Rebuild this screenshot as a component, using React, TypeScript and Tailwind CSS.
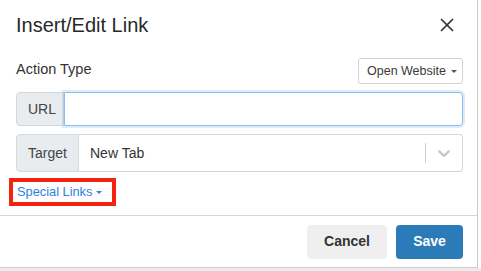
import { X } from "lucide-react";

function Caret({ className }: { className?: string }) {
  return (
    <span
      className={`inline-block w-0 h-0 border-x-[3px] border-t-[3px] border-x-transparent border-t-current ${className ?? ""}`}
    />
  );
}

export default function App() {
  return (
    <div className="w-[481px] h-[271px] bg-white overflow-hidden flex flex-col font-['Liberation_Sans',Arial,sans-serif] text-[#2b2b2b]">
      <div className="w-[478px] h-[268px] shrink-0 bg-white border-r border-b border-[#cbcbcb] flex flex-col">
        {/* Header */}
        <div className="h-[48px] shrink-0 flex items-start justify-between pl-4 pr-[19px]">
          <h2 className="pt-[13px] text-[20px] leading-[24px] text-[#282828]">Insert/Edit Link</h2>
          <button className="mt-[14px] text-[#333]">
            <X className="w-[22px] h-[22px]" strokeWidth={1.9} />
          </button>
        </div>

        {/* Body */}
        <div className="flex-1 pl-4 pr-[14px]">
          <div className="mt-[10px] h-[26px] flex items-start justify-between">
            <span className="pt-[2px] text-[14.5px] leading-[18px] text-[#333]">Action Type</span>
            <button className="h-[26px] w-[105px] border border-[#d2d2d2] rounded-[3px] flex items-center gap-[5px] pl-[8px] text-[12.5px] text-[#3a3a3a]">
              Open Website
              <Caret className="text-[#555]" />
            </button>
          </div>

          <div className="mt-[8px] h-[34px] flex">
            <div className="w-[48px] shrink-0 bg-[#e9ecef] border border-[#d3d7db] rounded-l-[4px] flex items-center pl-[11px] text-[14px] text-[#444]">
              URL
            </div>
            <div className="flex-1 bg-white border border-[#8cbcf0] rounded-r-[4px] shadow-[0_0_0_2px_rgba(120,170,235,0.25)]" />
          </div>

          <div className="mt-[8px] h-[38px] flex">
            <div className="w-[63px] shrink-0 bg-[#e9ecef] border border-[#d6d9dc] rounded-l-[4px] flex items-center pl-[11px] text-[14px] text-[#444]">
              Target
            </div>
            <div className="flex-1 border border-l-0 border-[#d6d6d6] rounded-r-[4px] flex items-center">
              <span className="flex-1 pl-[11px] text-[14px] text-[#333]">New Tab</span>
              <span className="w-px h-[20px] bg-[#cfcfcf]" />
              <span className="w-[36px] flex items-center justify-center text-[#c8c8c8]">
                <svg viewBox="0 0 20 20" className="w-[20px] h-[20px]" fill="currentColor">
                  <path d="M4.516 7.548c0.436-0.446 1.043-0.481 1.576 0l3.908 3.747 3.908-3.747c0.533-0.481 1.141-0.446 1.574 0 0.436 0.445 0.408 1.197 0 1.615-0.406 0.418-4.695 4.502-4.695 4.502-0.217 0.223-0.502 0.335-0.787 0.335s-0.57-0.112-0.789-0.335c0 0-4.287-4.084-4.695-4.502s-0.436-1.17 0-1.615z" />
                </svg>
              </span>
            </div>
          </div>

          <div className="mt-[6px] -ml-[7px] w-[107px] h-[28px] border-[4px] border-[#f2230f] flex items-center pl-[4px]">
            <button className="flex items-center gap-[4px] text-[12.8px] text-[#2f7fe0]">
              Special Links
              <Caret />
            </button>
          </div>
        </div>

        {/* Footer */}
        <div className="h-[52px] shrink-0 border-t border-[#d6d6d6] flex items-center justify-end gap-[9px] pr-[14px]">
          <button className="w-[80px] h-[34px] rounded-[4px] bg-[#efefef] text-[14px] font-bold text-[#333]">
            Cancel
          </button>
          <button className="w-[67px] h-[34px] rounded-[4px] bg-[#2b7bb9] text-[14px] font-bold text-white">
            Save
          </button>
        </div>
      </div>
      <div className="flex-1 bg-[#ececec]" />
    </div>
  );
}
